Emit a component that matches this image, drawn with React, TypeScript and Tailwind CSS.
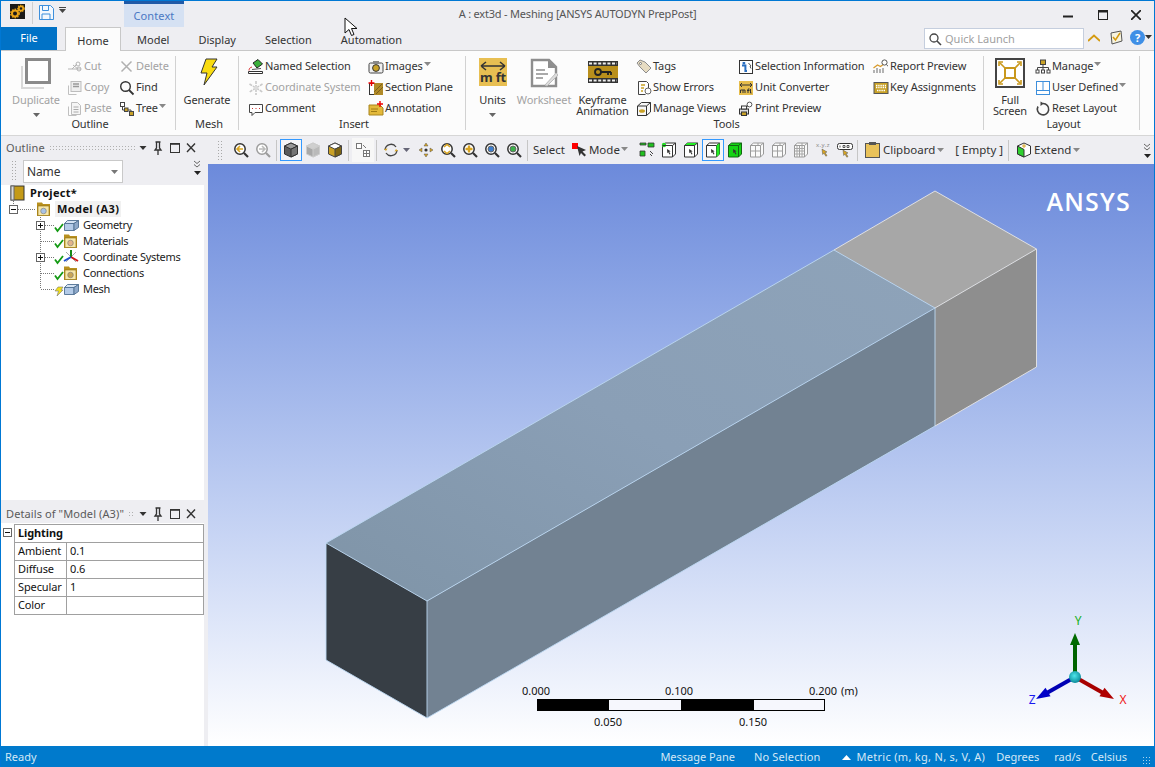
import React from "react";

type P = { children?: React.ReactNode };
const S = ({ children, w = 16, h = 16, vb }: P & { w?: number; h?: number; vb?: string }) => (
  <svg width={w} height={h} viewBox={vb || `0 0 ${w} ${h}`} className="shrink-0 block">{children}</svg>
);
const Caret = ({ c = "#666", cls = "" }: { c?: string; cls?: string }) => (
  <svg width="7" height="4" viewBox="0 0 7 4" className={`shrink-0 ${cls}`}><path d="M0 0h7L3.5 4z" fill={c} /></svg>
);

/* ribbon icons */
const Gold = "#c9a227";
const I = {
  cut: <S><path d="M1 10h13M5 10l5-5M6 6l5 4" stroke="#b5b5b5" fill="none" /><circle cx="11" cy="5" r="2" fill="none" stroke="#b5b5b5" /><circle cx="12" cy="10" r="2" fill="none" stroke="#b5b5b5" /></S>,
  copy: <S><path d="M1.5 5.5v9h8" fill="none" stroke="#c0c0c0" /><rect x="4" y="1.5" width="10" height="10" fill="#eee" stroke="#bdbdbd" /><path d="M6 4h6M6 6.5h6" stroke="#999" strokeWidth="1.4" /></S>,
  paste: <S><path d="M1.5 5.5v9h8" fill="none" stroke="#c0c0c0" /><path d="M4.5 1.5h6l3 3v9h-9z" fill="#f5f5f5" stroke="#bdbdbd" /><path d="M6.5 6h5M6.5 8.5h5M6.5 11h5" stroke="#aaa" /></S>,
  del: <S><path d="M2.5 2.5l10 10M12.5 2.5l-10 10" stroke="#b0b0b0" strokeWidth="1.5" /></S>,
  find: <S><circle cx="6.5" cy="6.5" r="4.8" fill="none" stroke="#333" strokeWidth="1.4" /><path d="M10 10l4.5 4.5" stroke="#333" strokeWidth="1.8" /></S>,
  tree: <S><rect x="1.5" y="1.5" width="4" height="4" fill="#fff" stroke="#444" /><rect x="5.5" y="7" width="3.5" height="3.5" fill={Gold} stroke="#444" /><rect x="10.5" y="10.5" width="4" height="4" fill={Gold} stroke="#444" /><path d="M3.5 6v3h2M9 9h3v1.5" fill="none" stroke="#444" /></S>,
  named: <S><path d="M0.5 12.5h14v2h-14z" fill="#fff" stroke="#333" /><path d="M1 11.5c0-2 1-3 3-3.5" fill="none" stroke="#d33" /><path d="M5 4l5-3.5 4.5 4.5L9 9z" fill="#3bb03b" stroke="#222" /><path d="M4 10.5l9-1" stroke="#555" /></S>,
  coord: <S><path d="M8 1v14M1.5 4l13 8M14.5 4l-13 8" stroke="#c9c9c9" strokeWidth="1.6" strokeDasharray="3 1" /><circle cx="8" cy="8" r="2" fill="#ddd" /></S>,
  comment: <S><path d="M1.5 3.5h13v8H7l-3 3v-3H1.5z" fill="#fff" stroke="#444" /><path d="M4 7.5h1M7.5 7.5h1M11 7.5h1" stroke="#c33" /></S>,
  images: <S><rect x="1" y="4" width="14" height="10" rx="1.5" fill="#eee" stroke="#444" /><rect x="5" y="2" width="6" height="3" fill="#888" /><circle cx="8" cy="9" r="3.4" fill={Gold} stroke="#333" /></S>,
  section: <S><rect x="1.5" y="3.5" width="13" height="11" fill="#fff" stroke="#333" /><path d="M6 3h9v12H6z" fill="#b08a28" /><path d="M6 12l8-8M8 14l7-7" stroke="#7d611b" /><path d="M3.5 0v6M0.5 3h6" stroke="#e00" strokeWidth="1.4" /></S>,
  annot: <S><path d="M1 4h11l3 3v7H1z" fill="#e3b93a" stroke="#a8851f" /><path d="M3 8h7M3 10.5h6" stroke="#a07c15" /><path d="M12 0v6M9 3h6" stroke="#e00" strokeWidth="1.4" /></S>,
  tags: <S><path d="M1 4l3-3 5 2 6 6-5 5-6-6z" fill="#e7dcc2" stroke="#8c8c8c" /><circle cx="4.5" cy="4.5" r="1" fill="#fff" stroke="#777" /></S>,
  errors: <S><path d="M2.5 1.5h8l2 2V8M2.5 1.5v13h7" fill="#fff" stroke="#444" /><path d="M5 5h4M5 8h3M5 11h2" stroke={Gold} strokeWidth="1.4" /><circle cx="12" cy="11" r="3" fill="#fff" stroke="#666" /></S>,
  views: <S><path d="M1.5 5l4-3.5h9v9.5l-4 3.5h-9z" fill="#f7f7f7" stroke="#333" /><path d="M1.5 5h9v9.5M10.5 5l4-3.5" fill="none" stroke="#333" /><ellipse cx="6" cy="10" rx="3" ry="1.8" fill={Gold} /></S>,
  info: <S><rect x="1.5" y="1.5" width="13" height="13" fill="#fff" stroke="#333" /><rect x="4.6" y="3" width="2.6" height="2.4" fill="#2b6fc0" /><path d="M4 6.5h3.4v5.5H9" stroke="#2b6fc0" strokeWidth="2" fill="none" /><path d="M10.5 4l2.5 3-1 .5 1 2" stroke="#555" fill="none" /></S>,
  unit: <S><rect width="14" height="14" x="1" y="1" fill="#e6bd4c" /><path d="M2 5h12M2 5l2-2M2 5l2 2M14 5l-2-2M14 5l-2 2" stroke="#333" fill="none" /><path d="M2.5 13v-3h2.5v3M5 10h2v3M10 13V9h1.5M9 10.5h2.5M12.5 9v4h1" stroke="#333" fill="none" /></S>,
  print: <S><rect x="1.5" y="8" width="9" height="5" fill="#ddd" stroke="#333" /><rect x="3.5" y="5" width="5" height="3" fill="#fff" stroke="#333" /><rect x="3.5" y="11" width="5" height="3.5" fill={Gold} stroke="#333" /><circle cx="11.5" cy="3.5" r="2.4" fill="#fff" stroke="#555" /><path d="M10 5.2l-1.5 1.5" stroke="#555" /></S>,
  report: <S><path d="M1 14v-3M4 14v-5M7 14v-4M10 14V9" stroke="#9a9a9a" strokeWidth="1.5" /><path d="M0.5 9l4-3 3 1.5L11 5" stroke="#d89a2a" strokeWidth="1.3" fill="none" /><circle cx="11.5" cy="3.5" r="2.6" fill="#fff" stroke="#555" /><path d="M13.3 5.5l1.7 1.7" stroke="#555" /></S>,
  keys: <S><rect x="1" y="2.5" width="14" height="11" fill="#c9a227" stroke="#555" /><path d="M3 5.5h10M3 7.5h10M4 10.5h8" stroke="#fff" strokeDasharray="1.4 .8" strokeWidth="1.3" /></S>,
  manage: <S><rect x="5.5" y="1" width="5" height="4.5" fill={Gold} stroke="#444" /><path d="M8 5.5v3M2.5 11V8.5h11V11M8 8.5V11" fill="none" stroke="#444" /><rect x="1" y="11" width="3" height="3" fill="#fff" stroke="#444" /><rect x="6.5" y="11" width="3" height="3" fill="#fff" stroke="#444" /><rect x="12" y="11" width="3" height="3" fill="#fff" stroke="#444" /></S>,
  user: <S><rect x="1.5" y="1.5" width="13" height="13" fill="#fff" stroke="#3d8fdc" /><path d="M1.5 10.5h13M8 1.5v9" stroke="#3d8fdc" /></S>,
  reset: <S><path d="M8 2.5a5.7 5.7 0 1 1-5 3" fill="none" stroke="#444" strokeWidth="1.6" /><path d="M5.5 0.5l3.5 2-3.5 2.5z" fill="#444" /></S>,
};

const Small = ({ icon, label, off, caret, w }: { icon: React.ReactNode; label: string; off?: boolean; caret?: boolean; w?: string }) => (
  <div className={`flex items-center h-[21px] shrink-0 whitespace-nowrap ${w || ""} ${off ? "text-[#a3a3a3]" : "text-[#333]"}`}>
    <span className="mr-px">{icon}</span>
    <span>{label}</span>
    {caret && <Caret cls="ml-px mb-[5px]" c="#888" />}
  </div>
);
const Col = ({ children, w }: P & { w: string }) => <div className={`flex flex-col ${w}`}>{children}</div>;

const Big = ({ icon, label, w, off, caret }: { icon: React.ReactNode; label: React.ReactNode; w: string; off?: boolean; caret?: boolean }) => (
  <div className={`flex flex-col items-center ${w} ${off ? "text-[#a3a3a3]" : "text-[#333]"}`}>
    <div className="h-[36px] pt-[2px]">{icon}</div>
    <div className="leading-[11.5px] text-center whitespace-nowrap pt-[1.5px]">{label}</div>
    {caret && <Caret cls="mt-[8px]" />}
  </div>
);

const Group = ({ w, label, children }: P & { w: string; label: string }) => (
  <div className={`flex h-full ${w}`}>
    <div className="flex-1 flex flex-col pt-[5px] min-w-0">
      <div className="flex h-[61px]">{children}</div>
      <div className="h-[14px] leading-[14px] text-center pl-[4px] text-[#333]">{label}</div>
    </div>
    <div className="w-px my-[5px] bg-[#d2d2d2]" />
  </div>
);

/* toolbar icons */
const Mag = ({ off, plus, arrow, ball }: { off?: boolean; plus?: boolean; arrow?: "l" | "r" | "v"; ball?: string }) => {
  const k = off ? "#9c9c9c" : "#333";
  return (
    <S>
      <circle cx="7" cy="7" r="5.2" fill="#fff" stroke={k} strokeWidth="1.5" />
      <path d="M11 11l4 4" stroke={k} strokeWidth="2.2" />
      {plus && <path d="M7 3.5v7M3.5 7h7" stroke="#d9a520" strokeWidth="2.4" />}
      {arrow === "l" && <path d="M10 7H5M7 4L4 7l3 3" stroke="#d9a520" strokeWidth="1.6" fill="none" />}
      {arrow === "r" && <path d="M4 7h5M7 4l3 3-3 3" stroke="#bbb" strokeWidth="1.6" fill="none" />}
      {arrow === "v" && <path d="M4 5l3-2.5L10 5M4 9l3 2.5L10 9" stroke="#d9a520" strokeWidth="1.5" fill="none" />}
      {ball && <circle cx="7" cy="7" r="3" fill={ball} stroke="#666" />}
    </S>
  );
};
const Cube = ({ t, f, r, k = "#333" }: { t: string; f: string; r: string; k?: string }) => (
  <S>
    <path d="M8 1l6.5 3v8L8 15l-6.5-3V4z" fill={f} stroke={k} strokeLinejoin="round" />
    <path d="M8 1l6.5 3L8 7.2 1.5 4z" fill={t} stroke={k} strokeLinejoin="round" />
    <path d="M8 7.2l6.5-3.2v8L8 15z" fill={r} stroke={k} strokeLinejoin="round" />
  </S>
);
const Sel = ({ fill, top, corner, full }: { fill?: boolean; top?: boolean; corner?: boolean; full?: boolean }) => (
  <S>
    <path d="M1.5 3.5l3-2.5h10v11l-3 3h-10z" fill={full ? "#14d414" : "#fff"} stroke={full ? "#116611" : "#333"} />
    {top && <path d="M1.5 3.5l3-2.5h10l-3 2.5z" fill="#22ee22" />}
    {corner && <circle cx="3" cy="3" r="2.2" fill="#22dd22" />}
    <path d="M1.5 3.5h10V15M11.5 3.5l3-2.5" fill="none" stroke={full ? "#116611" : "#333"} />
    {fill && <path d="M11.5 3.5l3-2.5v11l-3 3z" fill="#22ee22" />}
    <path d="M6 7l3.6 2.2-1.4.5L9.5 12l-1 .4-1.2-2.2-1 1z" fill="#333" />
  </S>
);
const Grid = ({ n }: { n: number }) => (
  <S>
    <path d="M1.5 3.5l3-2.5h10v11l-3 3h-10z" fill="#fafafa" stroke="#999" />
    <path d="M1.5 3.5h10V15M11.5 3.5l3-2.5" fill="none" stroke="#999" />
    {n >= 1 && <path d="M6.5 3.5V15M1.5 9h10M9 1v2.5" stroke="#a0a0a0" fill="none" />}
    {n >= 2 && <path d="M4 3.5V15M9 3.5V15M1.5 6.5h10M1.5 12h10" stroke="#a8a8a8" fill="none" />}
  </S>
);
const Gap = ({ w }: { w: string }) => <div className={`h-full shrink-0 ${w}`} />;
const Tb = ({ children, on }: P & { on?: boolean }) => (
  <div className={`w-[22px] h-[22px] flex items-center justify-center shrink-0 ${on ? "border border-[#3399ff] bg-[#f5f5f7]" : ""}`}>{children}</div>
);
const Sep = ({ w = "ml-[6px] mr-[6px]" }: { w?: string }) => <div className={`w-px h-[21px] bg-[#c6c6c6] shrink-0 ${w}`} />;
const Grip = ({ h, cls = "" }: { h: string; cls?: string }) => (
  <div className={`w-[7px] shrink-0 ${h} ${cls} [background-image:radial-gradient(#a9a9a9_0.6px,transparent_0.7px)] [background-size:3px_3px]`} />
);

/* panel header */
const PanelHead = ({ title, cls = "" }: { title: string; cls?: string }) => (
  <div className={`flex items-center h-[18px] pl-[5px] pr-[6px] text-[#5a5a5a] bg-[#eeeef2] ${cls}`}>
    <span className="whitespace-nowrap tracking-[0.1px]">{title}</span>
    <div className="flex-1 mx-[4px] h-[6px] [background-image:radial-gradient(#b0b0b0_0.6px,transparent_0.7px)] [background-size:3px_3px]" />
    <Caret c="#333" cls="w-[8px] mr-[5px]" />
    <div className="mr-[4px]"><S w={12} h={14}><path d="M3.5 1h5M4.5 1v6L3 9h6L7.5 7V1M6 9v5" stroke="#333" fill="none" strokeWidth="1.3" /></S></div>
    <div className="mr-[2px]"><S w={14} h={14}><rect x="2.5" y="2.5" width="9" height="9" fill="none" stroke="#333" /><path d="M2.5 3h9" stroke="#333" strokeWidth="1.6" /></S></div>
    <S w={14} h={14}><path d="M3 2.5l8 8.5M11 2.5L3 11" stroke="#333" strokeWidth="1.4" /></S>
  </div>
);

/* tree */
const Box = ({ x, plus }: { x: number; plus?: boolean }) => (
  <g>
    <rect x={x + 0.5} y={4.5} width="8" height="8" fill="#fff" stroke="#666" />
    <path d={`M${x + 2} 8.5h5${plus ? `M${x + 4.5} 6v5` : ""}`} stroke="#111" />
  </g>
);
const Dot = ({ d }: { d: string }) => <path d={d} stroke="#777" strokeDasharray="1 1" fill="none" />;
const Check = () => <path d="M55 10.5l2.5 3.5 5.5-7" stroke="#149a14" strokeWidth="1.8" fill="none" />;
const Folder = ({ x, inner }: { x: number; inner: string }) => (
  <g>
    <path d={`M${x} 1.5h5l1 1.5h7v12H${x}z`} fill="#b8901f" />
    <rect x={x + 1} y={5} width="11" height="9.5" fill="#f7e7a8" stroke="#8c6d12" strokeWidth=".6" />
    <circle cx={x + 6.5} cy={10} r="2.8" fill={inner} stroke="#777" strokeWidth=".6" />
  </g>
);
const Block = () => (
  <g stroke="#4f6f92" strokeWidth=".9" strokeLinejoin="round">
    <path d="M64.5 6.5h9.5v7h-9.5z" fill="#b4cbe8" />
    <path d="M64.5 6.5l3-3h11l-4.500 3z" fill="#d5e3f3" />
    <path d="M74 6.500l4.500-3v7l-4.500 3z" fill="#8fa9c9" />
  </g>
);
const Row = ({ g, w, children }: P & { g: React.ReactNode; w: number }) => (
  <div className="flex items-center h-[16px] -ml-px">
    <svg width={w} height="16" viewBox={`0 0 ${w} 16`} className="shrink-0 block overflow-visible">{g}</svg>
    {children}
  </div>
);
const Child = ({ label, plus, last, icon, mark }: { label: string; plus?: boolean; last?: boolean; icon: React.ReactNode; mark?: React.ReactNode }) => (
  <Row w={83} g={<>
    <Dot d={`M40.5 0V${last ? 8 : 16}`} />
    <Dot d="M41 8.5H54" />
    {plus && <Box x={36} plus />}
    {mark || <Check />}
    {icon}
  </>}>
    <span className="tracking-[-0.3px] text-[#222]">{label}</span>
  </Row>
);

const DRow = ({ a, b }: { a: string; b: string }) => (
  <div className="grid grid-cols-[52px_1fr] h-[18px] border-b border-[#a0a0a0]">
    <div className="pl-[3px] leading-[16px] border-r border-[#a0a0a0] text-[#111]">{a}</div>
    <div className="pl-[3px] leading-[16px] text-[#111]">{b}</div>
  </div>
);

export default function App() {
  return (
    <div className="w-[1155px] h-[767px] overflow-hidden flex flex-col border-t border-x border-[#0078d4] bg-[#eeeef2] text-[11px] tracking-[-0.12px] font-['Noto_Sans','Open_Sans',sans-serif] relative">
      {/* Title bar */}
      <div className="h-[26px] grid grid-cols-[1fr_auto_1fr] shrink-0">
        <div className="flex items-start">
          <div className="ml-[9px] mt-[3px]">
            <svg width="15" height="15" viewBox="0 0 15 15" className="block"><rect width="15" height="15" fill="#1a1a1a" /><circle cx="5" cy="9.5" r="3" fill="none" stroke="#e8a317" strokeWidth="2" /><circle cx="5" cy="9.5" r="4.2" fill="none" stroke="#e8a317" strokeWidth="1.4" strokeDasharray="1.5 1.2" /><circle cx="11" cy="4.5" r="2.2" fill="none" stroke="#e8a317" strokeWidth="1.8" /><circle cx="11" cy="4.5" r="3.2" fill="none" stroke="#e8a317" strokeWidth="1.2" strokeDasharray="1.3 1" /></svg>
          </div>
          <div className="w-px h-[22px] bg-[#cfcfcf] ml-[7px] mt-[1px]" />
          <div className="ml-[6px] mt-[4px]">
            <S w={15} h={15}><path d="M.5.5h11l3 3v11H.5z" fill="#f4f8fd" stroke="#3d8fdc" /><path d="M3.5 1v4.5h6V1M3 14.5V9h8v5.5" fill="none" stroke="#3d8fdc" /></S>
          </div>
          <div className="ml-[5px] mt-[6px] flex flex-col items-center">
            <div className="w-[7px] h-px bg-[#444] mb-px" />
            <Caret c="#444" />
          </div>
          <div className="ml-[58px] w-[60px] h-[26px] bg-[#d5e1f3] border-t-[3px] border-[#1f5aa8] text-center text-[#4a78c4] leading-[23px] tracking-[0.1px]">Context</div>
        </div>
        <div className="text-[#555] leading-[25px] tracking-[-0.2px] whitespace-nowrap">A : ext3d - Meshing [ANSYS AUTODYN PrepPost]</div>
        <div className="flex justify-end items-start pr-[13px] pt-[9px]">
          <S w={10} h={10}><path d="M0 6.5h10" stroke="#222" strokeWidth="2" /></S>
          <div className="ml-[25px]"><S w={10} h={10}><rect x=".5" y=".5" width="9" height="9" fill="none" stroke="#222" /><path d="M0 1.5h10" stroke="#222" strokeWidth="2" /></S></div>
          <div className="ml-[23px]"><S w={10} h={10}><path d="M0 0l10 10M10 0L0 10" stroke="#222" strokeWidth="1.7" /></S></div>
        </div>
      </div>

      {/* Tabs */}
      <div className="h-[24px] flex shrink-0 text-[#333] border-b border-[#c8c8c8] relative tracking-normal">
        <div className="w-[56px] h-[23px] bg-[#0072c6] text-white text-center leading-[22px]">File</div>
        <div className="ml-[8px] w-[56px] h-[24px] bg-[#fcfcfc] border-x border-t border-[#c8c8c8] text-center leading-[26px] z-10">Home</div>
        <div className="ml-[16px] leading-[26px]">Model</div>
        <div className="ml-[29px] leading-[26px]">Display</div>
        <div className="ml-[29px] leading-[26px]">Selection</div>
        <div className="ml-[29px] leading-[26px]">Automation</div>
        <div className="flex-1" />
        <div className="w-[160px] h-[21px] mt-px bg-white border border-[#c5cede] flex items-center pl-[3px] text-[#a0a0a0] pt-px">
          <S w={14} h={14}><circle cx="6" cy="6" r="4" fill="none" stroke="#444" strokeWidth="1.3" /><path d="M9 9l4 4" stroke="#444" strokeWidth="1.6" /></S>
          <span className="ml-[3px]">Quick Launch</span>
        </div>
        <div className="ml-[4px] mt-[7px]"><S w={12} h={8}><path d="M0 7l6-5.5L12 7" fill="none" stroke="#d49a10" strokeWidth="1.8" /></S></div>
        <div className="ml-[8px] mt-[3px]"><S w={15} h={15}><path d="M3 3l10-2 1 10-10 3z" fill="#f7f3df" stroke="#555" /><path d="M5 7l2.5 3L12 3" fill="none" stroke="#d49a10" strokeWidth="1.5" /></S></div>
        <div className="ml-[7px] mt-[3px] w-[15px] h-[15px] rounded-full bg-[#3f8fe6] text-white text-center leading-[15px] font-bold text-[11px]">?</div>
        <Caret c="#333" cls="mt-[8px] mr-[2px]" />
      </div>

      {/* Ribbon */}
      <div className="h-[85px] flex shrink-0 bg-[#fcfcfc] border-b border-[#d6d6d6]">
        <Group w="w-[175px]" label="Outline">
          <div className="pl-[4px]" />
          <Big w="w-[62px]" off caret label="Duplicate" icon={
            <S w={32} h={32}><path d="M1 8h2v21h21v2H1z" fill="#d8d8d8" /><rect x="6.5" y="1.500" width="23" height="23" fill="#fff" stroke="#8a8a8a" strokeWidth="3" /></S>
          } />
          <Col w="w-[52px]">
            <Small icon={I.cut} label="Cut" off />
            <Small icon={I.copy} label="Copy" off />
            <Small icon={I.paste} label="Paste" off />
          </Col>
          <Col w="w-[56px]">
            <Small icon={I.del} label="Delete" off />
            <Small icon={I.find} label="Find" />
            <Small icon={I.tree} label="Tree" caret />
          </Col>
        </Group>
        <Group w="w-[63px]" label="Mesh">
          <Big w="w-full" label="Generate" icon={
            <div className="ml-[3px]"><S w={20} h={28}><path d="M7 1h11l-5 8h5L5 27l3-12H2z" fill="#f9dc10" stroke="#333" strokeWidth="1" strokeLinejoin="round" /></S></div>
          } />
        </Group>
        <Group w="w-[227px]" label="Insert">
          <div className="pl-[9px]" />
          <Col w="w-[120px]">
            <Small icon={I.named} label="Named Selection" />
            <Small icon={I.coord} label="Coordinate System" off />
            <Small icon={I.comment} label="Comment" />
          </Col>
          <Col w="w-[97px]">
            <Small icon={I.images} label="Images" caret />
            <Small icon={I.section} label="Section Plane" />
            <Small icon={I.annot} label="Annotation" />
          </Col>
        </Group>
        <Group w="w-[518px]" label="Tools">
          <Big w="w-[53px]" caret label="Units" icon={
            <S w={28} h={28}>
              <rect width="28" height="28" fill="#e8bf52" />
              <path d="M2 8h24M2 8l5-4M2 8l5 4M26 8l-5-4M26 8l-5 4" stroke="#333" strokeWidth="1.6" fill="none" />
              <text x="14" y="24" textAnchor="middle" fontSize="13" fontWeight="700" fill="#333" fontFamily="Noto Sans, sans-serif">m ft</text>
            </S>
          } />
          <Big w="w-[50px]" off label="Worksheet" icon={
            <S w={28} h={30}>
              <path d="M2 2h17l7 7v19H2z" fill="#fff" stroke="#8e8e8e" strokeWidth="2.4" />
              <path d="M18 2v8h8z" fill="#8e8e8e" />
              <path d="M6 12h9M6 16h12M6 20h7" stroke="#8e8e8e" strokeWidth="1.6" />
              <path d="M15 27l11-12 2 2-11 11z" fill="#ddd" stroke="#bbb" />
            </S>
          } />
          <Big w="w-[67px]" label={<>Keyframe<br />Animation</>} icon={
            <S w={30} h={28}>
              <rect y="3" width="30" height="22" fill="#b98f1c" />
              <rect y="3" width="30" height="5" fill="#333" /><rect y="20" width="30" height="5" fill="#333" />
              <path d="M1 5.5h28M1 22.5h28" stroke="#eee" strokeWidth="2" strokeDasharray="3 1.6" />
              <circle cx="10" cy="14" r="3" fill="none" stroke="#222" strokeWidth="1.8" />
              <path d="M13 14h10M20 14v3M23 14v3" stroke="#222" strokeWidth="1.8" />
            </S>
          } />
          <Col w="w-[102px]">
            <Small icon={I.tags} label="Tags" />
            <Small icon={I.errors} label="Show Errors" />
            <Small icon={I.views} label="Manage Views" />
          </Col>
          <Col w="w-[135px]">
            <Small icon={I.info} label="Selection Information" />
            <Small icon={I.unit} label="Unit Converter" />
            <Small icon={I.print} label="Print Preview" />
          </Col>
          <Col w="w-[109px]">
            <Small icon={I.report} label="Report Preview" />
            <Small icon={I.keys} label="Key Assignments" />
          </Col>
        </Group>
        <Group w="w-[156px]" label="Layout">
          <div className="pl-[1px]" />
          <Big w="w-[50px]" label={<>Full<br />Screen</>} icon={
            <S w={30} h={30}>
              <rect x="1" y="1" width="28" height="28" fill="#fff" stroke="#444" strokeWidth="2" />
              <rect x="10" y="10" width="10" height="10" fill="none" stroke="#c9981c" strokeWidth="2" />
              <path d="M5 5l5 5M25 5l-5 5M5 25l5-5M25 25l-5-5" stroke="#c9981c" strokeWidth="1.6" />
              <path d="M4 8V4h4M26 8V4h-4M4 22v4h4M26 22v4h-4" stroke="#c9981c" strokeWidth="1.6" fill="none" />
            </S>
          } />
          <Col w="w-[100px]">
            <Small icon={I.manage} label="Manage" caret />
            <Small icon={I.user} label="User Defined" caret />
            <Small icon={I.reset} label="Reset Layout" />
          </Col>
        </Group>
      </div>

      {/* Body */}
      <div className="flex-1 flex min-h-0">
        {/* Left column */}
        <div className="w-[207px] shrink-0 flex flex-col bg-[#eeeef2]">
          <div className="w-[203px] flex-1 flex flex-col pt-[3px]">
            <PanelHead title="Outline" />
            <div className="h-[28px] flex items-start relative">
              <Grip h="h-[20px]" cls="ml-[10px] mt-[3px]" />
              <div className="ml-[5px] mt-[3px] w-[100px] h-[23px] bg-white border border-[#c9c9c9] flex items-center justify-between pl-[3px] pr-[4px] text-[12px] text-[#333]">
                <span>Name</span><Caret c="#777" />
              </div>
              <div className="ml-auto mr-[3px] mt-[3px] flex flex-col items-center">
                <S w={8} h={8}><path d="M1 1l3 2.5L7 1M1 4.5L4 7l3-2.5" fill="none" stroke="#666" /></S>
                <Caret c="#222" cls="mt-[3px]" />
              </div>
            </div>
            <div className="flex-1 bg-white">
              <Row w={30} g={<>
                <rect x="11" y="1" width="13" height="14" fill="#c49a17" stroke="#333" />
                <rect x="11" y="1" width="3" height="14" fill="#d9d9d9" stroke="#666" />
              </>}>
                <span className="font-bold text-[#111] tracking-[0.3px]">Project*</span>
              </Row>
              <Row w={55} g={<>
                <Dot d="M13.5 0V4" />
                <Box x={9} />
                <Dot d="M18 8.5H36" />
                <Folder x={37} inner="#a9c3e6" />
              </>}>
                <span className="font-bold text-[#111] bg-[#f1f1f1] px-[2px] leading-[16px] tracking-[0.4px]">Model (A3)</span>
              </Row>
              <Child label="Geometry" plus icon={<Block />} />
              <Child label="Materials" icon={<Folder x={64} inner="#e2b58a" />} />
              <Child label="Coordinate Systems" plus icon={
                <g>
                  <path d="M66 3l10 10M76 3L66 13" stroke="#aaa" />
                  <path d="M71 8V1" stroke="#168a16" strokeWidth="2" />
                  <path d="M71 8l7 4" stroke="#d01818" strokeWidth="2" />
                  <path d="M71 8l-7 4" stroke="#1e4fd0" strokeWidth="2" />
                </g>
              } />
              <Child label="Connections" icon={<Folder x={64} inner="#c9a656" />} />
              <Child label="Mesh" last icon={<Block />} mark={
                <path d="M58 6h5l-2 3h2l-6 6 1.5-5H55z" fill="#f2e01a" stroke="#777" strokeWidth=".6" />
              } />
            </div>
          </div>
          <div className="w-[203px] h-[242px] mt-[4px] flex flex-col">
            <PanelHead title={'Details of "Model (A3)"'} cls="mt-px" />
            <div className="flex-1 bg-white pt-px">
              <div className="flex">
                <div className="w-[13px] shrink-0 pl-[2px] pt-[4px]">
                  <svg width="9" height="9" viewBox="0 0 9 9" className="block"><rect x=".5" y=".5" width="8" height="8" fill="#fff" stroke="#666" /><path d="M2 4.5h5" stroke="#111" /></svg>
                </div>
                <div className="w-[190px] border border-b-0 border-[#a0a0a0]">
                  <div className="h-[18px] pl-[3px] font-bold leading-[16px] border-b border-[#a0a0a0] text-[#111]">Lighting</div>
                  <DRow a="Ambient" b="0.1" />
                  <DRow a="Diffuse" b="0.6" />
                  <DRow a="Specular" b="1" />
                  <DRow a="Color" b="" />
                </div>
              </div>
            </div>
          </div>
        </div>

        {/* Right column */}
        <div className="flex-1 flex flex-col min-w-0">
          <div className="h-[28px] shrink-0 flex items-center text-[#333] text-[11.5px] whitespace-nowrap tracking-normal">
            <Grip h="h-[20px]" cls="ml-[9px]" />
            <Gap w="w-[6px]" />
            <Tb><Mag arrow="l" /></Tb>
            <Tb><Mag off arrow="r" /></Tb>
            <Sep w="ml-[2px] mr-[3px]" />
            <Tb on><Cube t="#999" f="#5c5c5c" r="#747474" /></Tb>
            <Tb><Cube t="#cfcfcf" f="#a8a8a8" r="#bababa" k="#ccc" /></Tb>
            <Tb><Cube t="#fff" f="#caa126" r="#7d6413" k="#444" /></Tb>
            <Sep w="ml-[2px] mr-[3px]" />
            <div className="w-[22px] h-[24px] bg-[#f7f7f7] flex items-center justify-center shrink-0">
              <S><rect x="1.5" y="1.5" width="5" height="5" fill="#fff" stroke="#777" /><rect x="8.5" y="8.5" width="6" height="6" fill="#fff" stroke="#777" /><path d="M11.5 8.5v6M8.5 11.5h6M8 3l3 3" stroke="#777" fill="none" /></S>
            </div>
            <Sep w="ml-[2px] mr-[3px]" />
            <Tb><S><path d="M2 8a6 6 0 0 1 11-3" fill="none" stroke="#444" strokeWidth="1.3" /><path d="M14 8a6 6 0 0 1-11 3" fill="none" stroke="#444" strokeWidth="1.3" /><path d="M1 7l2 2 1.5-2.5zM15 9l-2-2-1.5 2.5z" fill="#d9a520" /></S></Tb>
            <Caret c="#667" cls="ml-px mr-[5px]" />
            <Tb><S><path d="M8 1l2 3H6zM8 15l2-3H6zM1 8l3-2v4zM15 8l-3-2v4z" fill="#d9a520" stroke="#555" strokeWidth=".5" /><circle cx="8" cy="8" r="1.6" fill="#333" /></S></Tb>
            <Tb><Mag arrow="v" /></Tb>
            <Tb><Mag plus /></Tb>
            <Tb><Mag ball="#3d7ed0" /></Tb>
            <Tb><Mag ball="#3bb04a" /></Tb>
            <Sep w="ml-[2px] mr-[5px]" />
            <span>Select</span>
            <div className="ml-[7px]"><S><rect x="0" y="1" width="6" height="6" fill="#f00" /><path d="M5 4l9 4-3.5 1.5L14 13l-1.5 1.5-3.5-3.5L7.5 14z" fill="#333" /></S></div>
            <span className="ml-px">Mode</span>
            <Caret c="#888" cls="ml-px mb-[2px]" />
            <Gap w="w-[8px]" />
            <div className="flex shrink-0 items-center">
              <Tb><S><path d="M1 1h6v2H1zM9 1h6v4H9zM1 9h5v5H1z" fill="#1fc01f" stroke="#333" strokeWidth=".8" /><path d="M11 9l3 3M11 12l2 2" stroke="#444" /></S></Tb>
              <Tb><Sel corner /></Tb>
              <Tb><Sel top /></Tb>
              <Tb on><Sel fill /></Tb>
              <Tb><Sel full /></Tb>
              <Tb><Grid n={1} /></Tb>
              <Tb><Grid n={1} /></Tb>
              <Tb><Grid n={2} /></Tb>
              <Tb><svg width="18" height="16" viewBox="0 0 18 16" className="block"><text x="9" y="5" textAnchor="middle" fontSize="6" fill="#888" letterSpacing=".4">x.y.z</text><path d="M8 7l5 3-2 .6 2 3-1.2.6-1.8-3-1.3 1.3z" fill="#d9a520" stroke="#555" strokeWidth=".5" /></svg></Tb>
              <Tb><svg width="18" height="16" viewBox="0 0 18 16" className="block"><rect x="1.5" y="1.5" width="15" height="6" rx="2" fill="#fff" stroke="#333" /><path d="M4 3.5v2M7 3.5h2v2H7zM11 3.5h2v2h-2z" stroke="#333" fill="none" strokeWidth=".8" /><path d="M7 8l5 3-2 .6 2 3-1.2.6-1.8-3-1.3 1.3z" fill="#d9a520" stroke="#555" strokeWidth=".5" /></svg></Tb>
            </div>
            <Sep w="ml-[1px] mr-[7px]" />
            <S w={15} h={16}><rect x=".5" y="1.5" width="14" height="14" fill="#e9c25a" stroke="#555" /><rect x="4" y="0" width="7" height="3" fill="#555" /></S>
            <span className="ml-[3px]">Clipboard</span>
            <Caret c="#888" cls="ml-[2px]" />
            <span className="ml-[11px]">[ Empty ]</span>
            <Sep w="ml-[5px] mr-[7px]" />
            <S><path d="M8 1l6.5 3v8L8 15l-6.5-3V4z" fill="#fff" stroke="#333" /><path d="M1.5 4v8L8 15V7.5z" fill="#2fd02f" stroke="#333" /><path d="M8 2v4M6 4h4" stroke="#d9a520" /></S>
            <span className="ml-[2px]">Extend</span>
            <Caret c="#888" cls="ml-[2px]" />
            <div className="flex-1" />
            <div className="flex flex-col items-center mr-[3px]">
              <S w={8} h={8}><path d="M1 1l3 2.5L7 1M1 4.5L4 7l3-2.5" fill="none" stroke="#666" /></S>
              <Caret c="#222" cls="mt-[3px]" />
            </div>
          </div>

          {/* Viewport */}
          <div className="flex-1 relative bg-gradient-to-b from-[#6c8adb] to-white overflow-hidden">
            <svg className="absolute inset-0 block" width="946" height="582" viewBox="208 164 946 582">
              <defs>
                <linearGradient id="tf" x1="0" y1="1" x2="1" y2="0">
                  <stop offset="0" stopColor="#7f94a7" />
                  <stop offset="0.5" stopColor="#8a9fb6" />
                  <stop offset="1" stopColor="#8ea3b9" />
                </linearGradient>
              </defs>
              <polygon points="326,543 427,601 935,308 834,250" fill="url(#tf)" />
              <polygon points="427,601 935,308 935,426 427,718" fill="#728292" />
              <polygon points="326,543 427,601 427,718 326,660" fill="#373e45" />
              <polygon points="834,250 935,191 1036.5,249 935,308" fill="#a7a7a7" />
              <polygon points="935,308 1036.5,249 1036.5,367 935,426" fill="#8e8e8e" />
              <g stroke="#bcd8f2" strokeWidth="0.9" fill="none">
                <path d="M326 543L427 601L935 308V426L427 718V601M427 718L326 660V543M326 543L834 250L935 308" />
              </g>
              <g stroke="#e6e6e6" strokeWidth="0.9" fill="none">
                <path d="M834 250L935 191L1036.5 249V367L935 426M935 308L1036.5 249" />
              </g>
            </svg>
            <div className="absolute top-[22px] right-[23px] text-white text-[25px] leading-[30px] font-semibold tracking-[1.2px] font-['Open_Sans',sans-serif]">ANSYS</div>

            {/* Scale bar */}
            <div className="absolute left-[318px] top-[520px] w-[340px] h-[50px] text-[#111] text-[11px] tracking-normal">
              <div className="relative h-[15px] leading-[14px]">
                <span className="absolute left-[-4px]">0.000</span>
                <span className="absolute left-[139px]">0.100</span>
                <span className="absolute left-[283px]">0.200</span>
                <span className="absolute left-[315px]">(m)</span>
              </div>
              <div className="ml-[11px] w-[288px] h-[12px] flex border border-black bg-[#f6f7fd]">
                <div className="w-[71px] bg-black" /><div className="w-[72px]" /><div className="w-[73px] bg-black" />
              </div>
              <div className="relative h-[14px] leading-[14px] mt-[4px]">
                <span className="absolute left-[68px]">0.050</span>
                <span className="absolute left-[213px]">0.150</span>
              </div>
            </div>

            {/* Triad */}
            <svg className="absolute right-0 bottom-0 block" width="130" height="136" viewBox="1024 610 130 136">
              <defs>
                <radialGradient id="ball" cx=".45" cy=".4" r=".6"><stop offset="0" stopColor="#4fe6ea" /><stop offset="1" stopColor="#0a8a9a" /></radialGradient>
              </defs>
              <path d="M1075 677l-30 17" stroke="#0000b4" strokeWidth="4" />
              <path d="M1036 699L1045.5 687.7L1050.5 696.3z" fill="#0000c8" />
              <path d="M1075 677l30 17" stroke="#a80000" strokeWidth="4" />
              <path d="M1114 699L1104.5 687.7L1099.5 696.3z" fill="#b00000" />
              <path d="M1075 677v-36" stroke="#006400" strokeWidth="4" />
              <path d="M1075 633l5 12h-10z" fill="#006a00" />
              <circle cx="1075" cy="677" r="6" fill="url(#ball)" />
              <text x="1078" y="625" textAnchor="middle" fontSize="12" fill="#18b018" fontFamily="Noto Sans, sans-serif">Y</text>
              <text x="1123" y="704" textAnchor="middle" fontSize="12" fill="#f01818" fontFamily="Noto Sans, sans-serif">X</text>
              <text x="1032" y="704" textAnchor="middle" fontSize="12" fill="#1818f0" fontFamily="Noto Sans, sans-serif">Z</text>
            </svg>
          </div>
        </div>
      </div>

      {/* Status bar */}
      <div className="h-[21px] shrink-0 bg-[#007acc] flex items-center text-[#d5e8f6] whitespace-nowrap pl-[4px] pr-[3px] pt-px tracking-normal">
        <span>Ready</span>
        <div className="flex-1" />
        <span>Message Pane</span>
        <span className="ml-[19px] tracking-[0.15px]">No Selection</span>
        <svg width="9" height="5" viewBox="0 0 9 5" className="ml-[22px] mr-[5px]"><path d="M0 5l4.5-5L9 5z" fill="#fff" /></svg>
        <span className="tracking-[0.3px]">Metric (m, kg, N, s, V, A)</span>
        <span className="ml-[11px]">Degrees</span>
        <span className="ml-[15px]">rad/s</span>
        <span className="ml-[10px]">Celsius</span>
        <div className="ml-[15px] mt-[6px] w-[9px] h-[9px] [background-image:radial-gradient(#a9d3ee_0.7px,transparent_0.8px)] [background-size:3px_3px]" />
      </div>

      {/* Mouse cursor */}
      <svg className="absolute left-[343px] top-[16px] block" width="14" height="20" viewBox="0 0 14 20"><path d="M1 1v15l4-3.5 2.5 6 2.5-1-2.5-6H13z" fill="#fff" stroke="#111" /></svg>
    </div>
  );
}
